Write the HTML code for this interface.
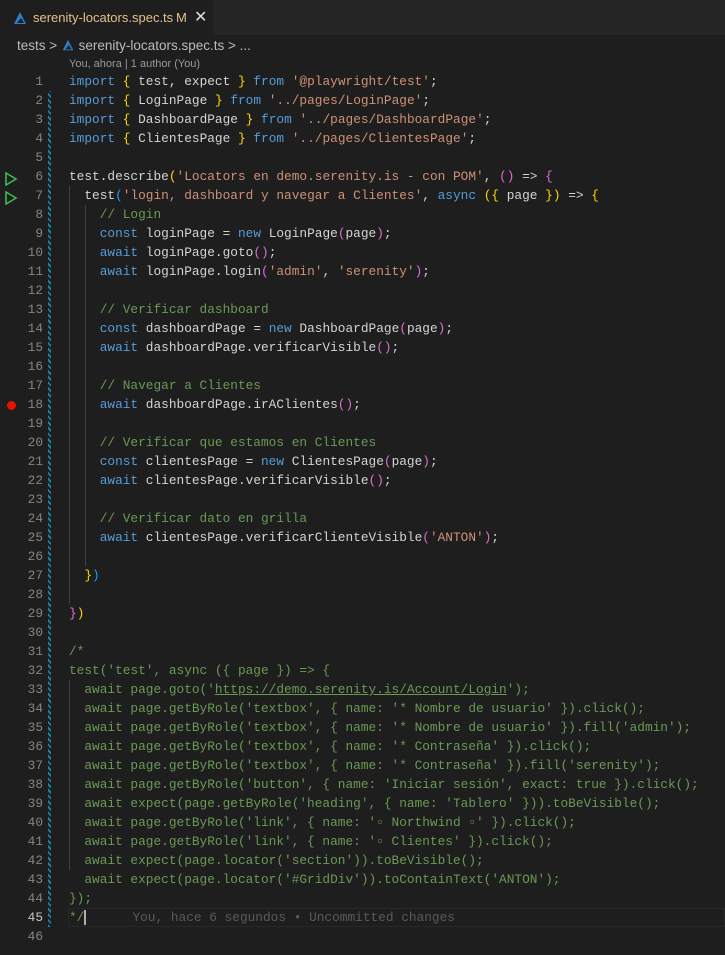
<!DOCTYPE html>
<html><head><meta charset="utf-8"><style>
body{margin:0;width:725px;height:955px;background:#1e1e1e;overflow:hidden;font-family:"Liberation Sans",sans-serif;position:relative}
.tabbar{position:absolute;top:0;left:0;width:725px;height:35px;background:#252526}
.tab{position:absolute;left:0;top:0;width:213px;height:35px;background:#1e1e1e;color:#e2c08d;font-size:13px}
.tab .nm{position:absolute;left:33px;top:10px}
.tab .m{position:absolute;left:176px;top:10px}
.tab .x{position:absolute;left:194px;top:7px;color:#ddd;font-size:16px}
.bc{position:absolute;top:38px;left:17px;color:#bbb;font-size:13.5px}
.lens{position:absolute;top:58px;left:69px;color:#999;font-size:11px}
.code{position:absolute;top:72px;left:0;font-family:"Liberation Mono",monospace;font-size:12.8px;line-height:19px;white-space:pre;color:#d4d4d4}
.ln{position:absolute;left:0;width:43px;text-align:right;color:#858585;font-family:"Liberation Mono",monospace;font-size:12.8px;line-height:19px}
.l{position:absolute;left:69px;height:19px;white-space:pre}
.k{color:#569cd6}.s{color:#ce9178}.c{color:#6a9955}.y{color:#ffd700}.p{color:#da70d6}.b{color:#179fff}
.gut{position:absolute;left:48px;width:3px;background:repeating-linear-gradient(45deg,#1b81a8 0 2px,#1e1e1e 2px 4px)}
.guide{position:absolute;width:1px;background:#404040}
</style></head><body>
<div class="tabbar"><div class="tab">
<svg style="position:absolute;left:12px;top:10px" width="16" height="16" viewBox="0 0 16 16"><path d="M2 14 L8 2 L14 14 Z" fill="#2d7fc7"/><path d="M5 13 L9 8 L12 13Z" fill="#1e1e1e"/></svg>
<span class="nm">serenity-locators.spec.ts</span><span class="m">M</span><span class="x">✕</span></div></div>
<div class="bc">tests &gt; <svg width="14" height="14" viewBox="0 0 16 16" style="vertical-align:-2px"><path d="M2 14 L8 2 L14 14 Z" fill="#2d7fc7"/><path d="M5 13 L9 8 L12 13Z" fill="#1e1e1e"/></svg> serenity-locators.spec.ts &gt; ...</div>
<div class="lens">You, ahora | 1 author (You)</div>
<div class="gut" style="top:91px;height:836px"></div>
<div class="guide" style="left:69px;top:186px;height:418px"></div>
<div class="guide" style="left:85px;top:205px;height:361px"></div>
<div class="guide" style="left:69px;top:680px;height:190px"></div>
<div style="position:absolute;left:68px;top:908px;width:657px;height:19px;border:1px solid #282828;box-sizing:border-box"></div>
<svg style="position:absolute;left:4px;top:172px" width="14" height="14"><path d="M2 1 L12 7 L2 13 Z" fill="none" stroke="#3fb950" stroke-width="1.6"/></svg>
<svg style="position:absolute;left:4px;top:191px" width="14" height="14"><path d="M2 1 L12 7 L2 13 Z" fill="none" stroke="#3fb950" stroke-width="1.6"/></svg>
<div style="position:absolute;left:7px;top:401px;width:9px;height:9px;border-radius:50%;background:#e51400"></div>
<div class="code" style="width:725px">
<div class="ln" style="top:0">1</div><div class="ln" style="top:19px">2</div><div class="ln" style="top:38px">3</div><div class="ln" style="top:57px">4</div><div class="ln" style="top:76px">5</div><div class="ln" style="top:95px">6</div><div class="ln" style="top:114px">7</div><div class="ln" style="top:133px">8</div><div class="ln" style="top:152px">9</div><div class="ln" style="top:171px">10</div><div class="ln" style="top:190px">11</div><div class="ln" style="top:209px">12</div><div class="ln" style="top:228px">13</div><div class="ln" style="top:247px">14</div><div class="ln" style="top:266px">15</div><div class="ln" style="top:285px">16</div><div class="ln" style="top:304px">17</div><div class="ln" style="top:323px">18</div><div class="ln" style="top:342px">19</div><div class="ln" style="top:361px">20</div><div class="ln" style="top:380px">21</div><div class="ln" style="top:399px">22</div><div class="ln" style="top:418px">23</div><div class="ln" style="top:437px">24</div><div class="ln" style="top:456px">25</div><div class="ln" style="top:475px">26</div><div class="ln" style="top:494px">27</div><div class="ln" style="top:513px">28</div><div class="ln" style="top:532px">29</div><div class="ln" style="top:551px">30</div><div class="ln" style="top:570px">31</div><div class="ln" style="top:589px">32</div><div class="ln" style="top:608px">33</div><div class="ln" style="top:627px">34</div><div class="ln" style="top:646px">35</div><div class="ln" style="top:665px">36</div><div class="ln" style="top:684px">37</div><div class="ln" style="top:703px">38</div><div class="ln" style="top:722px">39</div><div class="ln" style="top:741px">40</div><div class="ln" style="top:760px">41</div><div class="ln" style="top:779px">42</div><div class="ln" style="top:798px">43</div><div class="ln" style="top:817px">44</div><div class="ln" style="top:836px;color:#c6c6c6">45</div><div class="ln" style="top:855px">46</div>
<div class="l" style="top:0"><span class="k">import</span> <span class="y">{</span> test, expect <span class="y">}</span> <span class="k">from</span> <span class="s">'@playwright/test'</span>;</div>
<div class="l" style="top:19px"><span class="k">import</span> <span class="y">{</span> LoginPage <span class="y">}</span> <span class="k">from</span> <span class="s">'../pages/LoginPage'</span>;</div>
<div class="l" style="top:38px"><span class="k">import</span> <span class="y">{</span> DashboardPage <span class="y">}</span> <span class="k">from</span> <span class="s">'../pages/DashboardPage'</span>;</div>
<div class="l" style="top:57px"><span class="k">import</span> <span class="y">{</span> ClientesPage <span class="y">}</span> <span class="k">from</span> <span class="s">'../pages/ClientesPage'</span>;</div>
<div class="l" style="top:95px">test.describe<span class="y">(</span><span class="s">'Locators en demo.serenity.is - con POM'</span>, <span class="p">()</span> =&gt; <span class="p">{</span></div>
<div class="l" style="top:114px">  test<span class="b">(</span><span class="s">'login, dashboard y navegar a Clientes'</span>, <span class="k">async</span> <span class="y">({</span> page <span class="y">})</span> =&gt; <span class="y">{</span></div>
<div class="l" style="top:133px">    <span class="c">// Login</span></div>
<div class="l" style="top:152px">    <span class="k">const</span> loginPage = <span class="k">new</span> LoginPage<span class="p">(</span>page<span class="p">)</span>;</div>
<div class="l" style="top:171px">    <span class="k">await</span> loginPage.goto<span class="p">()</span>;</div>
<div class="l" style="top:190px">    <span class="k">await</span> loginPage.login<span class="p">(</span><span class="s">'admin'</span>, <span class="s">'serenity'</span><span class="p">)</span>;</div>
<div class="l" style="top:228px">    <span class="c">// Verificar dashboard</span></div>
<div class="l" style="top:247px">    <span class="k">const</span> dashboardPage = <span class="k">new</span> DashboardPage<span class="p">(</span>page<span class="p">)</span>;</div>
<div class="l" style="top:266px">    <span class="k">await</span> dashboardPage.verificarVisible<span class="p">()</span>;</div>
<div class="l" style="top:304px">    <span class="c">// Navegar a Clientes</span></div>
<div class="l" style="top:323px">    <span class="k">await</span> dashboardPage.irAClientes<span class="p">()</span>;</div>
<div class="l" style="top:361px">    <span class="c">// Verificar que estamos en Clientes</span></div>
<div class="l" style="top:380px">    <span class="k">const</span> clientesPage = <span class="k">new</span> ClientesPage<span class="p">(</span>page<span class="p">)</span>;</div>
<div class="l" style="top:399px">    <span class="k">await</span> clientesPage.verificarVisible<span class="p">()</span>;</div>
<div class="l" style="top:437px">    <span class="c">// Verificar dato en grilla</span></div>
<div class="l" style="top:456px">    <span class="k">await</span> clientesPage.verificarClienteVisible<span class="p">(</span><span class="s">'ANTON'</span><span class="p">)</span>;</div>
<div class="l" style="top:494px">  <span class="y">}</span><span class="b">)</span></div>
<div class="l" style="top:532px"><span class="p">}</span><span class="y">)</span></div>
<div class="l c" style="top:570px">/*</div>
<div class="l c" style="top:589px">test('test', async ({ page }) =&gt; {</div>
<div class="l c" style="top:608px">  await page.goto('<u>https://demo.serenity.is/Account/Login</u>');</div>
<div class="l c" style="top:627px">  await page.getByRole('textbox', { name: '* Nombre de usuario' }).click();</div>
<div class="l c" style="top:646px">  await page.getByRole('textbox', { name: '* Nombre de usuario' }).fill('admin');</div>
<div class="l c" style="top:665px">  await page.getByRole('textbox', { name: '* Contraseña' }).click();</div>
<div class="l c" style="top:684px">  await page.getByRole('textbox', { name: '* Contraseña' }).fill('serenity');</div>
<div class="l c" style="top:703px">  await page.getByRole('button', { name: 'Iniciar sesión', exact: true }).click();</div>
<div class="l c" style="top:722px">  await expect(page.getByRole('heading', { name: 'Tablero' })).toBeVisible();</div>
<div class="l c" style="top:741px">  await page.getByRole('link', { name: '▫ Northwind ▫' }).click();</div>
<div class="l c" style="top:760px">  await page.getByRole('link', { name: '▫ Clientes' }).click();</div>
<div class="l c" style="top:779px">  await expect(page.locator('section')).toBeVisible();</div>
<div class="l c" style="top:798px">  await expect(page.locator('#GridDiv')).toContainText('ANTON');</div>
<div class="l c" style="top:817px">});</div>
<div class="l" style="top:836px"><span class="c">*/</span><span style="border-left:2px solid #aeafad"></span>      <span style="color:#5a5a5a">You, hace 6 segundos • Uncommitted changes</span></div>
</div>
</body></html>
